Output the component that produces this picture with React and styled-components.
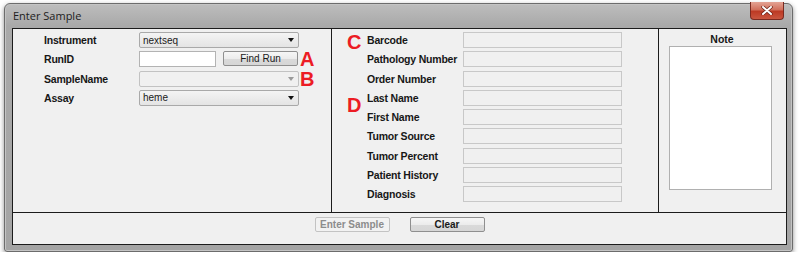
import React from 'react';
import styled, { createGlobalStyle } from 'styled-components';

const GlobalStyle = createGlobalStyle`
  html, body {
    margin: 0;
    padding: 0;
    background: #ffffff;
  }
  body {
    font-family: "Liberation Sans", Arial, sans-serif;
    color: #151515;
  }
`;

const Page = styled.div`
  padding: 3px 0 0 4px;
`;

const Window = styled.div`
  box-sizing: border-box;
  width: 789px;
  height: 249px;
  border: 1px solid #6c6c6c;
  border-radius: 6px 6px 3px 3px;
  background: linear-gradient(to bottom, #bdbdbd 0px, #a9a9a9 22px, #a4a4a4 100%);
  box-shadow: 0 2px 5px rgba(0, 0, 0, 0.45), inset 0 0 0 1px #c4c4c4;
  padding: 0 5px 6px 7px;
  display: flex;
  flex-direction: column;
`;

const TitleBar = styled.div`
  height: 24px;
  display: flex;
  justify-content: space-between;
  align-items: flex-start;
  padding-left: 1px;
  padding-right: 3px;
`;

const Title = styled.span`
  font-family: "Open Sans", "Liberation Sans", sans-serif;
  font-size: 11px;
  line-height: 24px;
  color: #1d1d1d;
`;

const CloseButton = styled.div`
  width: 32px;
  height: 17px;
  margin-top: -2px;
  border: 1px solid #7a2a20;
  border-top: none;
  border-radius: 0 0 4px 4px;
  background: linear-gradient(to bottom, #e4a394 0%, #d1705c 45%, #bd3a24 55%, #c9563f 100%);
  display: flex;
  align-items: center;
  justify-content: center;
`;

const Panel = styled.div`
  flex: 1;
  border: 1px solid #1c1c1c;
  background: #f0f0f0;
  display: flex;
  flex-direction: column;
`;

const Main = styled.div`
  height: 183px;
  border-bottom: 1px solid #1c1c1c;
  display: flex;
`;

const Column = styled.div`
  width: ${p => p.$w}px;
  border-right: ${p => (p.$last ? 'none' : '1px solid #1c1c1c')};
  padding: 3px 0 0 ${p => p.$pl}px;
  flex-shrink: 0;
`;

const FormGrid = styled.div`
  display: grid;
  grid-template-columns: ${p => p.$cols};
  grid-auto-rows: 16px;
  row-gap: ${p => p.$gap}px;
  align-items: center;
`;

const Label = styled.span`
  font-size: 10.5px;
  font-weight: bold;
  letter-spacing: -0.2px;
  color: #171717;
  white-space: nowrap;
`;

const Marker = styled.span`
  font-size: 20px;
  font-weight: bold;
  line-height: 15px;
  height: 15px;
  color: #ec1c24;
  margin-left: ${p => p.$ml || 0}px;
  padding-top: ${p => p.$pt || 0}px;
  align-self: start;
`;

const Select = styled.div`
  height: 16px;
  box-sizing: border-box;
  border: 1px solid ${p => (p.$disabled ? '#c2c2c2' : '#a9a9a9')};
  border-radius: 2px;
  background: ${p =>
    p.$disabled ? '#f0f0f0' : 'linear-gradient(to bottom, #f4f4f4, #e4e4e4)'};
  display: flex;
  align-items: center;
  justify-content: space-between;
  padding: 0 4px 0 3px;
  font-size: 10px;
  color: #1a1a1a;
`;

const Arrow = styled.span`
  width: 0;
  height: 0;
  border-left: 3px solid transparent;
  border-right: 3px solid transparent;
  border-top: 4px solid ${p => (p.$disabled ? '#9a9a9a' : '#111')};
`;

const InputRow = styled.div`
  display: flex;
  gap: 7px;
  height: 16px;
`;

const TextInput = styled.div`
  width: 77px;
  height: 16px;
  box-sizing: border-box;
  border: 1px solid #b3b3b3;
  background: #ffffff;
`;

const Field = styled.div`
  width: 159px;
  height: 16px;
  box-sizing: border-box;
  border: 1px solid #c8c8c8;
  background: #f0f0f0;
`;

const Button = styled.div`
  width: ${p => p.$w}px;
  height: ${p => p.$h}px;
  box-sizing: border-box;
  border: 1px solid ${p => (p.$disabled ? '#c3c3c3' : '#8f8f8f')};
  border-radius: 2px;
  background: ${p =>
    p.$disabled ? '#f2f2f2' : 'linear-gradient(to bottom, #f6f6f6 0%, #ececec 50%, #dadada 51%, #d6d6d6 100%)'};
  display: flex;
  align-items: center;
  justify-content: center;
  font-size: 10px;
  font-weight: ${p => (p.$bold ? 'bold' : 'normal')};
  color: ${p => (p.$disabled ? '#8c8c8c' : '#1a1a1a')};
`;

const NoteTitle = styled.div`
  text-align: center;
  font-size: 10.5px;
  font-weight: bold;
  line-height: 14px;
  color: #171717;
  padding-right: 1px;
`;

const NoteArea = styled.div`
  width: 103px;
  height: 144px;
  box-sizing: border-box;
  margin-left: 10px;
  border: 1px solid #b0b0b0;
  background: #ffffff;
`;

const Footer = styled.div`
  flex: 1;
  display: flex;
  justify-content: center;
  align-items: flex-start;
  gap: 20px;
  padding-top: 4px;
`;

const patientFields = [
  'Barcode',
  'Pathology Number',
  'Order Number',
  'Last Name',
  'First Name',
  'Tumor Source',
  'Tumor Percent',
  'Patient History',
  'Diagnosis',
];

const markers = { Barcode: { text: 'C', pt: 3 }, 'Last Name': { text: 'D', pt: 8 } };

const App = () => {
  return (
    <Page>
      <GlobalStyle />
      <Window>
        <TitleBar>
          <Title>Enter Sample</Title>
          <CloseButton>
            <svg width="12" height="9" viewBox="0 0 12 9">
              <path d="M2 1 L10 8 M10 1 L2 8" stroke="#6b2418" strokeWidth="3.4" strokeLinecap="round" />
              <path d="M2 1 L10 8 M10 1 L2 8" stroke="#ffffff" strokeWidth="2" strokeLinecap="round" />
            </svg>
          </CloseButton>
        </TitleBar>
        <Panel>
          <Main>
            <Column $w={287} $pl={31}>
              <FormGrid $cols="95px 160px auto" $gap={3.33}>
                <Label>Instrument</Label>
                <Select>
                  nextseq
                  <Arrow />
                </Select>
                <span />

                <Label>RunID</Label>
                <InputRow>
                  <TextInput />
                  <Button $w={75} $h={15}>Find Run</Button>
                </InputRow>
                <Marker $ml={1} $pt={1}>A</Marker>

                <Label>SampleName</Label>
                <Select $disabled>
                  <span />
                  <Arrow $disabled />
                </Select>
                <Marker $ml={1} $pt={1}>B</Marker>

                <Label>Assay</Label>
                <Select>
                  heme
                  <Arrow />
                </Select>
                <span />
              </FormGrid>
            </Column>
            <Column $w={311} $pl={15}>
              <FormGrid $cols="20px 96px 159px" $gap={3.25}>
                {patientFields.map(name => (
                  <React.Fragment key={name}>
                    {markers[name] ? (
                      <Marker $pt={markers[name].pt}>{markers[name].text}</Marker>
                    ) : (
                      <span />
                    )}
                    <Label>{name}</Label>
                    <Field />
                  </React.Fragment>
                ))}
              </FormGrid>
            </Column>
            <Column $w={127} $pl={0} $last>
              <NoteTitle>Note</NoteTitle>
              <NoteArea />
            </Column>
          </Main>
          <Footer>
            <Button $w={75} $h={15} $bold $disabled>Enter Sample</Button>
            <Button $w={75} $h={15} $bold>Clear</Button>
          </Footer>
        </Panel>
      </Window>
    </Page>
  );
};

export default App;
